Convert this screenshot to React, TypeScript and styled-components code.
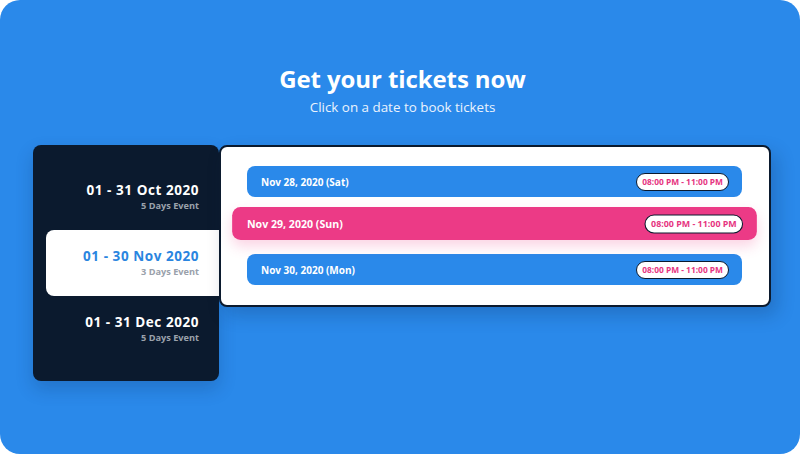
import styled, { createGlobalStyle } from 'styled-components';

const GlobalStyle = createGlobalStyle`
  html, body {
    margin: 0;
    padding: 0;
    background: #ffffff;
  }
  body {
    font-family: "Open Sans", "Liberation Sans", sans-serif;
  }
`;

const Stage = styled.div`
  width: 800px;
  height: 454px;
  background-color: #2a89ea;
  border-radius: 20px;
  box-sizing: border-box;
  padding-top: 62px;
  overflow: hidden;
`;

const Header = styled.header`
  display: flex;
  flex-direction: column;
  align-items: center;
  padding-left: 5px;
  color: #ffffff;
`;

const Title = styled.h1`
  margin: 0;
  font-size: 24px;
  line-height: 33px;
  font-weight: 700;
  letter-spacing: -0.1px;
`;

const Subtitle = styled.p`
  margin: 3px 0 0;
  font-size: 13.4px;
  line-height: 18px;
  font-weight: 400;
  color: #eaf3fd;
`;

const Booking = styled.div`
  display: flex;
  align-items: flex-start;
  margin: 29px 0 0 33px;
`;

const Months = styled.nav`
  width: 186px;
  height: 236px;
  box-sizing: border-box;
  padding: 19px 0;
  background-color: #0b1a2e;
  border-radius: 8px;
  box-shadow: 0 8px 18px rgba(8, 30, 70, 0.2);
  display: flex;
  flex-direction: column;
  align-items: flex-end;
`;

const MonthTab = styled.div<{ $active?: boolean }>`
  width: 173px;
  height: 66px;
  box-sizing: border-box;
  padding-right: 20px;
  display: flex;
  flex-direction: column;
  justify-content: center;
  align-items: flex-end;
  background-color: ${(p) => (p.$active ? '#ffffff' : 'transparent')};
  border-radius: 8px 0 0 8px;
`;

const MonthRange = styled.span<{ $active?: boolean }>`
  font-size: 13.5px;
  line-height: 17px;
  font-weight: 700;
  letter-spacing: 0.55px;
  color: ${(p) => (p.$active ? '#2a85e0' : '#ffffff')};
`;

const MonthNote = styled.span`
  font-size: 9.2px;
  line-height: 13px;
  font-weight: 700;
  color: #9aa1ab;
`;

const Panel = styled.section`
  width: 552px;
  box-sizing: border-box;
  padding: 19px 27px 20px 26px;
  background-color: #ffffff;
  border: 2px solid #0b1a2e;
  border-radius: 8px;
  box-shadow: 6px 8px 18px rgba(8, 30, 70, 0.22);
  display: flex;
  flex-direction: column;
`;

const DateRow = styled.div<{ $active?: boolean }>`
  height: 31px;
  box-sizing: border-box;
  padding: 0 13px 0 14px;
  display: flex;
  align-items: center;
  justify-content: space-between;
  border-radius: 8px;
  background-color: ${(p) => (p.$active ? '#ec3a86' : '#2a89ea')};
  color: #ffffff;
  font-size: 10px;
  font-weight: 700;
  margin-top: ${(p) => (p.$active ? '11px' : '0')};
  margin-bottom: ${(p) => (p.$active ? '15px' : '0')};
  transform: ${(p) => (p.$active ? 'scale(1.06)' : 'none')};
  box-shadow: ${(p) => (p.$active ? '0 6px 12px rgba(236, 58, 134, 0.22)' : 'none')};
`;

const TimeBadge = styled.span`
  height: 18px;
  box-sizing: border-box;
  padding: 0 5px;
  display: inline-flex;
  align-items: center;
  background-color: #ffffff;
  border: 1.5px solid #0b1a2e;
  border-radius: 9px;
  color: #e6347f;
  font-size: 8.4px;
  font-weight: 700;
`;

const months = [
  { range: '01 - 31 Oct 2020', note: '5 Days Event' },
  { range: '01 - 30 Nov 2020', note: '3 Days Event', active: true },
  { range: '01 - 31 Dec 2020', note: '5 Days Event' },
];

const dates = [
  { label: 'Nov 28, 2020 (Sat)' },
  { label: 'Nov 29, 2020 (Sun)', active: true },
  { label: 'Nov 30, 2020 (Mon)' },
];

export default function App() {
  return (
    <>
      <GlobalStyle />
      <Stage>
        <Header>
          <Title>Get your tickets now</Title>
          <Subtitle>Click on a date to book tickets</Subtitle>
        </Header>
        <Booking>
          <Months>
            {months.map((m) => (
              <MonthTab key={m.range} $active={m.active}>
                <MonthRange $active={m.active}>{m.range}</MonthRange>
                <MonthNote>{m.note}</MonthNote>
              </MonthTab>
            ))}
          </Months>
          <Panel>
            {dates.map((d) => (
              <DateRow key={d.label} $active={d.active}>
                <span>{d.label}</span>
                <TimeBadge>08:00 PM - 11:00 PM</TimeBadge>
              </DateRow>
            ))}
          </Panel>
        </Booking>
      </Stage>
    </>
  );
}
